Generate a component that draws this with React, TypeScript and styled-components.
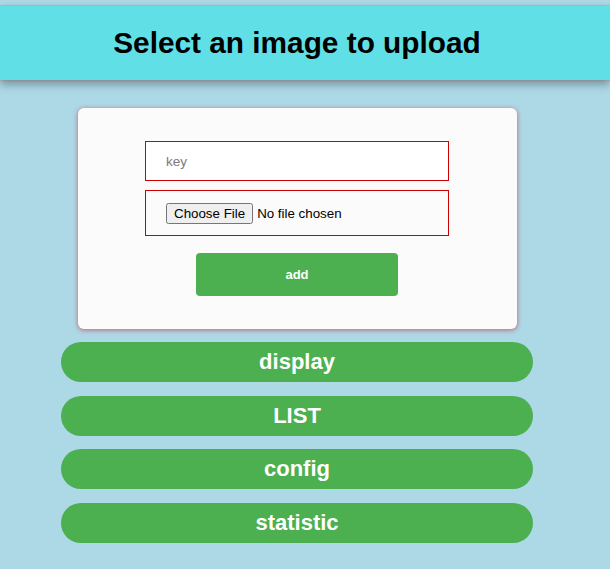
import React from "react";
import styled, { createGlobalStyle } from "styled-components";

const Global = createGlobalStyle`
  html, body { margin: 0; padding: 0; }
  body {
    background: #add8e6;
    font-family: "Liberation Sans", Arial, sans-serif;
    min-height: 569px;
  }
`;

const Header = styled.header`
  margin-top: 6px;
  height: 74px;
  background: #61dfe6;
  display: flex;
  align-items: center;
  justify-content: center;
  padding-right: 16px;
  box-shadow: 0 0 1.5px rgba(190, 110, 110, 0.9), 0 4px 9px rgba(0, 0, 0, 0.35);
  position: relative;
  z-index: 1;
`;

const Title = styled.h1`
  margin: 0;
  font-size: 29.8px;
  font-weight: 700;
  color: #000;
`;

const Main = styled.main`
  display: flex;
  flex-direction: column;
  align-items: center;
  width: 594px;
  padding-top: 28px;
`;

const Card = styled.form`
  width: 439px;
  box-sizing: border-box;
  background: #fbfbfb;
  border-radius: 6px;
  box-shadow: 0 1px 5px rgba(200, 0, 20, 0.55);
  padding: 33px 0 33px;
  display: flex;
  flex-direction: column;
  align-items: center;
`;

const KeyInput = styled.input`
  width: 304px;
  height: 40px;
  box-sizing: border-box;
  border: 1px solid #cc0000;
  background: #fff;
  padding: 0 20px;
  font-family: "Liberation Sans", Arial, sans-serif;
  font-size: 13.5px;
  outline: none;
  &::placeholder { color: #7a7a7a; }
`;

const FileBox = styled.div`
  width: 304px;
  height: 46px;
  box-sizing: border-box;
  margin-top: 9px;
  border: 1px solid #cc0000;
  padding: 0 20px;
  display: flex;
  align-items: center;
  input {
    font-family: "Liberation Sans", Arial, sans-serif;
    font-size: 13.33px;
    color: #000;
  }
`;

const AddButton = styled.button`
  margin-top: 17px;
  width: 202px;
  height: 43px;
  border: none;
  border-radius: 4px;
  background: #4caf50;
  color: #fff;
  font-family: "Liberation Sans", Arial, sans-serif;
  font-size: 13px;
  font-weight: 700;
  cursor: pointer;
`;

const NavList = styled.nav`
  margin-top: 13px;
  display: flex;
  flex-direction: column;
  gap: 13.6px;
`;

const NavButton = styled.button`
  width: 472px;
  height: 40px;
  border: none;
  border-radius: 20px;
  background: #4caf50;
  color: #fff;
  font-family: "Liberation Sans", Arial, sans-serif;
  font-size: 22px;
  font-weight: 700;
  cursor: pointer;
  padding: 0;
`;

export default function App() {
  const items = ["display", "LIST", "config", "statistic"];
  return (
    <>
      <Global />
      <Header>
        <Title>Select an image to upload</Title>
      </Header>
      <Main>
        <Card onSubmit={(e) => e.preventDefault()}>
          <KeyInput type="text" placeholder="key" />
          <FileBox>
            <input type="file" />
          </FileBox>
          <AddButton type="submit">add</AddButton>
        </Card>
        <NavList>
          {items.map((t) => (
            <NavButton key={t}>{t}</NavButton>
          ))}
        </NavList>
      </Main>
    </>
  );
}
